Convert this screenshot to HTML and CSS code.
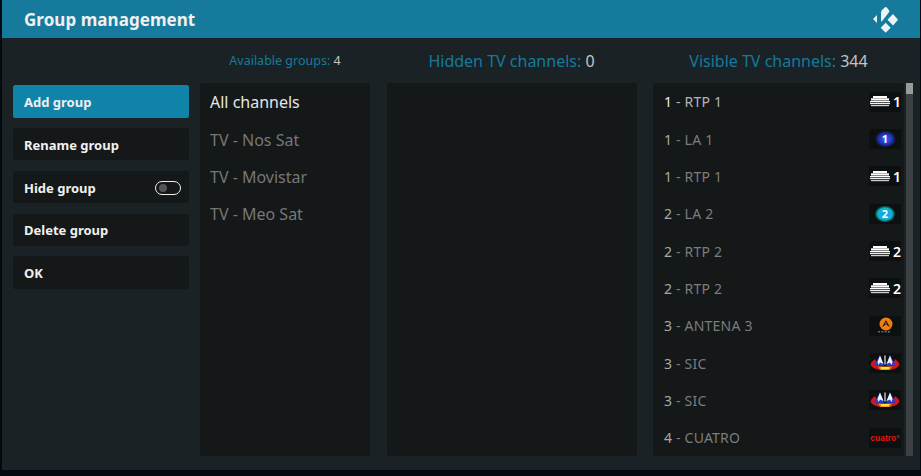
FILE: index.html
```html
<!DOCTYPE html>
<html lang="pt">
<head>
    <meta charset="UTF-8">
    <title>Group management</title>
    <link rel="stylesheet" href="styles.css">
</head>
<body>

<svg class="defs" width="0" height="0">
    <defs>
        <radialGradient id="glow-la1"><stop offset="0.25" stop-color="#2f55e8"/><stop offset="0.65" stop-color="#2030b0"/><stop offset="1" stop-color="#0d1011"/></radialGradient>
        <radialGradient id="glow-la2"><stop offset="0.3" stop-color="#10a4ea"/><stop offset="0.68" stop-color="#0fb6c8"/><stop offset="1" stop-color="#0d1011"/></radialGradient>
        <filter id="soft"><feGaussianBlur stdDeviation="0.35"/></filter>
        <symbol id="rtp" viewBox="0 0 20 11">
            <path d="M3 0h14v2H3z" fill="#fff"/>
            <path d="M1 2.300h18v2.200H1z" fill="#fff"/>
            <path d="M0 5h20v1.300H0z" fill="#fff"/>
            <path d="M0 7h20v1.200H0z" fill="#f0f0f0"/>
            <path d="M1 9h18v1.200H1z" fill="#d0d0d0"/>
        </symbol>
        <symbol id="antena" viewBox="0 0 32 20">
            <circle cx="17" cy="8" r="6.500" fill="#f07d10"/>
            <path d="M17 4l1.300 2.500 2.700 4.500-2.800-1.700-1.200-1.300-1.200 1.300-2.800 1.700 2.700-4.500z" fill="#1a1410"/>
            <path d="M17 6l.9 1.800h-1.800z" fill="#f59018"/>
            <path d="M9 15.800h13" stroke="#999" stroke-dasharray="2 1.300"/>
        </symbol>
        <symbol id="sic" viewBox="0 0 32 20">
            <g filter="url(#soft)">
                <path d="M1.500 12Q2.500 8 6 6L9 13Q16 15 23 13L26 6Q29.500 8 30.500 12Q28 15.500 23 16.500L9 16.500Q4 15.500 1.500 12z" fill="#d2141c"/>
                <path d="M5 12.500L11 2.500l4 10.500zM27 12.500L21 2.500l-4 10.500z" fill="#2440d8"/>
                <path d="M8.500 9L11 2.500 14.500 11 11 9.500 9.500 12zM23.500 9L21 2.500 17.500 11 21 9.500 22.500 12z" fill="#f2f5ff"/>
                <path d="M15.200 2.500h1.600v9h-1.600z" fill="#a8b4bc"/>
                <path d="M9 13.500h14l-2 3.500H11z" fill="#e8840f"/>
                <path d="M11.500 14h9l-1 2.200h-7z" fill="#ffe23a"/>
            </g>
        </symbol>
    </defs>
</svg>

<div class="window">
    <header class="titlebar">
        <h1>Group management</h1>
        <svg class="kodi" viewBox="0 0 26 27">
            <path d="M1 13L5 9v8z"/>
            <path d="M9 15V6.500Q9 5 10 4L13 1.200Q14 .5 14.800 1.500L17 4.200Q17.800 5.200 17 6.200L10 15.200Q9.300 15.800 9 15z"/>
            <path d="M21 8l5 5.700-5 5.700-5.500-5.700z"/>
            <path d="M13.700 16.800l5 5-5 5-5-5z"/>
        </svg>
    </header>

    <div class="content">
        <nav class="actions">
            <div class="action active">Add group</div>
            <div class="action">Rename group</div>
            <div class="action">Hide group<span class="toggle"></span></div>
            <div class="action">Delete group</div>
            <div class="action">OK</div>
        </nav>

        <section class="col col-groups">
            <h2 class="col-title small">Available groups: <span>4</span></h2>
            <ul class="list groups">
                <li class="selected">All channels</li>
                <li>TV - Nos Sat</li>
                <li>TV - Movistar</li>
                <li>TV - Meo Sat</li>
            </ul>
        </section>

        <section class="col col-hidden">
            <h2 class="col-title">Hidden TV channels: <span>0</span></h2>
            <ul class="list"></ul>
        </section>

        <section class="col col-visible">
            <h2 class="col-title">Visible TV channels: <span>344</span></h2>
            <div class="list-wrap">
                <ul class="list channels">
                    <li class="selected"><span><b>1</b> - RTP 1</span>
                        <span class="logo"><svg class="rtp"><use href="#rtp"/></svg><i>1</i></span></li>
                    <li><span><b>1</b> - LA 1</span>
                        <span class="logo"><svg viewBox="0 0 32 20"><ellipse cx="16.500" cy="10" rx="10.500" ry="8.500" fill="url(#glow-la1)"/><text x="16" y="14" class="badge">1</text></svg></span></li>
                    <li><span><b>1</b> - RTP 1</span>
                        <span class="logo"><svg class="rtp"><use href="#rtp"/></svg><i>1</i></span></li>
                    <li><span><b>2</b> - LA 2</span>
                        <span class="logo"><svg viewBox="0 0 32 20"><ellipse cx="16" cy="10" rx="10.500" ry="8.500" fill="url(#glow-la2)"/><text x="16" y="14" class="badge">2</text></svg></span></li>
                    <li><span><b>2</b> - RTP 2</span>
                        <span class="logo"><svg class="rtp"><use href="#rtp"/></svg><i>2</i></span></li>
                    <li><span><b>2</b> - RTP 2</span>
                        <span class="logo"><svg class="rtp"><use href="#rtp"/></svg><i>2</i></span></li>
                    <li><span><b>3</b> - ANTENA 3</span>
                        <span class="logo"><svg viewBox="0 0 32 20"><use href="#antena"/></svg></span></li>
                    <li><span><b>3</b> - SIC</span>
                        <span class="logo"><svg viewBox="0 0 32 20"><use href="#sic"/></svg></span></li>
                    <li><span><b>3</b> - SIC</span>
                        <span class="logo"><svg viewBox="0 0 32 20"><use href="#sic"/></svg></span></li>
                    <li><span><b>4</b> - CUATRO</span>
                        <span class="logo cuatro">cuatro°</span></li>
                </ul>
                <div class="scrollbar"><div class="thumb"></div></div>
            </div>
        </section>
    </div>
</div>

</body>
</html>
```

FILE: styles.css
```css
* {
    box-sizing: border-box;
}

html, body {
    height: 100%;
}

body {
    margin: 0;
    background: #02090f;
    font-family: "Noto Sans", sans-serif;
    overflow: hidden;
}

.defs {
    display: block;
    height: 0;
}

.window {
    margin: 0 1px 0 2px;
    height: 470px;
    background: #1a2226;
    display: flex;
    flex-direction: column;
}

.titlebar {
    height: 38px;
    flex: none;
    background: #157a9c;
    padding: 0 22px;
    display: flex;
    align-items: center;
    justify-content: space-between;
}

.titlebar h1 {
    margin: 0;
    font-size: 17px;
    font-weight: 700;
    letter-spacing: 0.05px;
    color: #f0f0f0;
}

.kodi {
    width: 26px;
    height: 27px;
    fill: #eaf3f6;
}

.content {
    flex: 1;
    display: flex;
    padding: 0 6px 14px 11px;
}

.actions {
    width: 176px;
    margin-top: 47.300px;
    display: flex;
    flex-direction: column;
    gap: 10.500px;
}

.action {
    height: 32.300px;
    padding: 1px 8px 0 11px;
    background: #141819;
    border-radius: 2px;
    color: #f0f0f0;
    font-size: 13px;
    font-weight: 700;
    display: flex;
    align-items: center;
    justify-content: space-between;
}

.action.active {
    background: #0f83a8;
}

.toggle {
    width: 26px;
    height: 14px;
    border: 1px solid #f0f0f0;
    border-radius: 7px;
    padding: 2px 3px;
    display: flex;
}

.toggle::before {
    content: "";
    width: 8px;
    height: 8px;
    border-radius: 50%;
    background: #555;
}

.col {
    display: flex;
    flex-direction: column;
}

.col-groups {
    width: 170px;
    margin-left: 11px;
}

.col-hidden {
    width: 250px;
    margin-left: 17px;
}

.col-hidden .col-title {
    padding-right: 1px;
}

.col-visible {
    width: 260px;
    margin-left: 16px;
}

.col-visible .col-title {
    padding-right: 9px;
}

.col-title {
    height: 45px;
    margin: 0;
    flex: none;
    display: flex;
    align-items: center;
    justify-content: center;
    font-size: 16px;
    font-weight: 400;
    color: #157a9c;
    white-space: pre;
}

.col-title.small {
    font-size: 12.500px;
}

.col-title span {
    color: #c4c4c4;
}

.list {
    list-style: none;
    margin: 0;
    padding: 0;
    flex: 1;
    background: #141819;
    border-radius: 2px;
}

.list li {
    height: 37.400px;
    padding: 0 10px;
    display: flex;
    align-items: center;
    font-size: 16px;
    color: #777;
}

.groups li:not(.selected) {
    padding-top: 1px;
}

.list li.selected {
    color: #e6e6e6;
}

.list-wrap {
    flex: 1;
    display: flex;
    gap: 2px;
}

.channels li {
    height: 37.350px;
    justify-content: space-between;
    font-size: 14px;
    letter-spacing: 0.2px;
    padding: 0 3px 0 11px;
    color: #7c7c7c;
}

.channels li b {
    font-weight: 400;
    color: #a8a8a8;
}

.channels li.selected {
    color: #b4b4b4;
}

.channels li.selected b {
    color: #ececec;
}

.logo {
    width: 32px;
    height: 20px;
    background: #0d1011;
    display: flex;
    align-items: center;
    gap: 3px;
}

.logo svg {
    width: 32px;
    height: 20px;
    display: block;
}

.logo svg.rtp {
    width: 20px;
    height: 11px;
    margin-left: 1px;
    flex: none;
}

.logo i {
    font-style: normal;
    font-weight: 600;
    font-size: 14px;
    letter-spacing: 0;
    color: #fff;
}

.badge {
    font-size: 11px;
    font-weight: 700;
    letter-spacing: 0;
    fill: #fff;
    text-anchor: middle;
}

.cuatro {
    justify-content: center;
    font-family: "Liberation Sans", sans-serif;
    font-size: 8.500px;
    font-weight: 700;
    letter-spacing: 0;
    color: #e8100c;
}

.scrollbar {
    width: 7px;
    background: #3c4244;
}

.thumb {
    height: 11px;
    background: #9a9a9a;
}
```
